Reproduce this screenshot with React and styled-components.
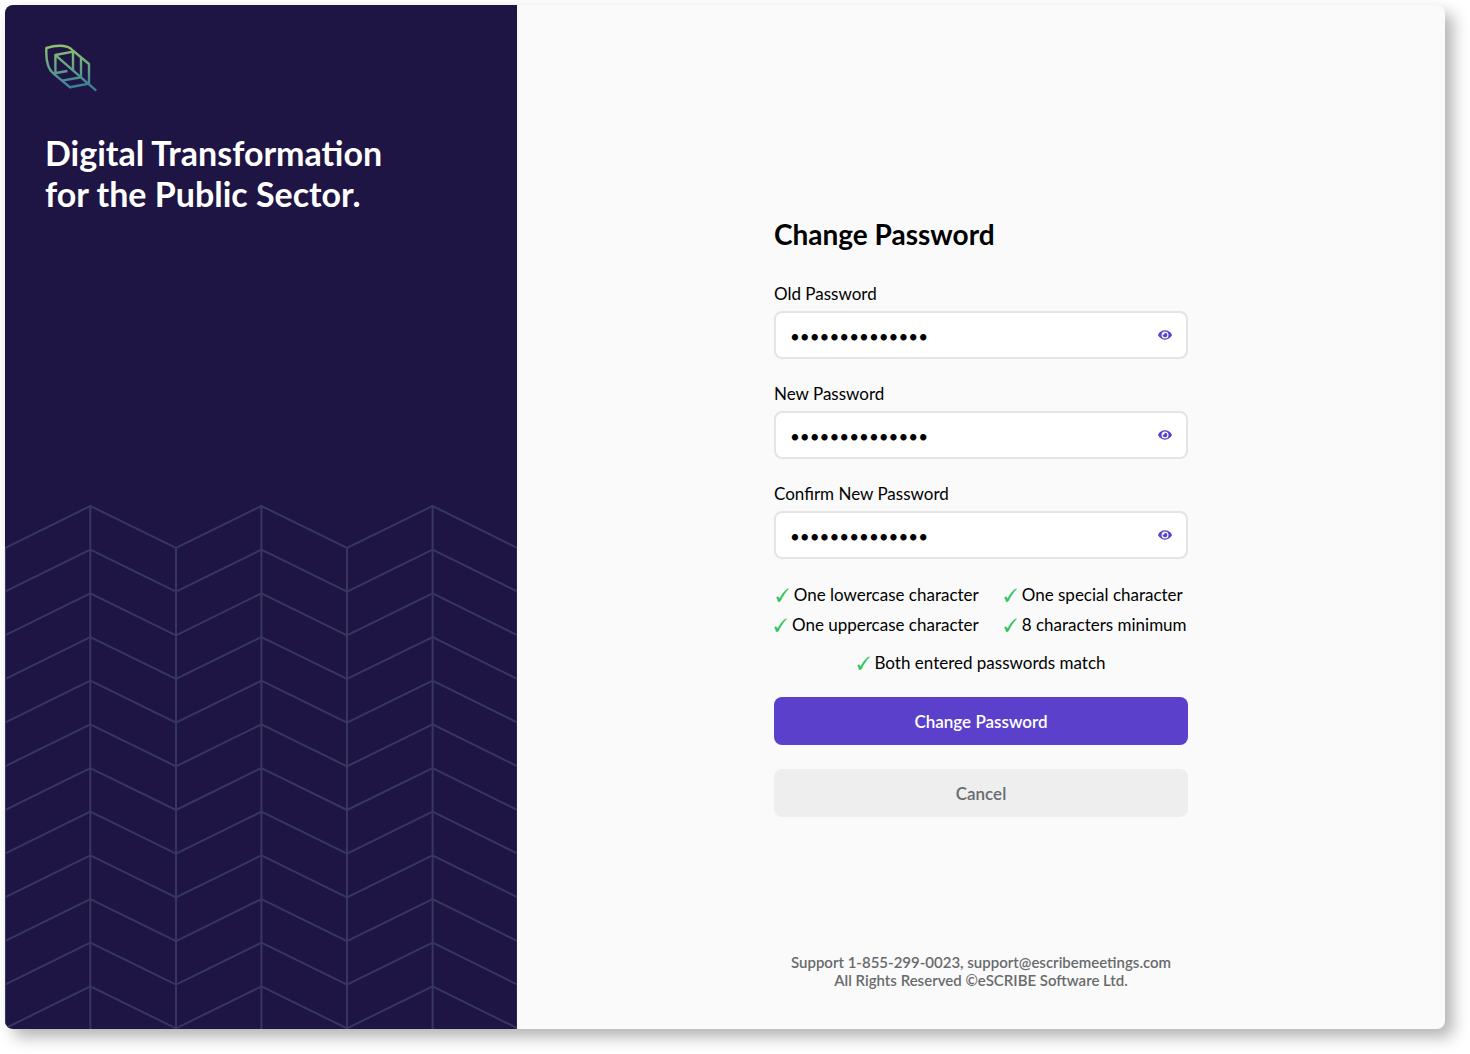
import React, { useState } from "react";
import styled, { createGlobalStyle } from "styled-components";
import { FaEye } from "react-icons/fa";

const GlobalStyle = createGlobalStyle`
  * {
    box-sizing: border-box;
  }

  body {
    margin: 0;
    background: #fff;
    font-family: Lato, sans-serif;
  }
`;

const Page = styled.div`
  display: flex;
  min-height: 100vh;
  padding: 5px 25px 25px 5px;
`;

const Card = styled.div`
  flex: 1;
  display: grid;
  grid-template-columns: 16fr 29fr;
  border-radius: 8px;
  overflow: hidden;
  background: #fafafa;
  box-shadow: 8px 8px 16px rgba(0, 0, 0, 0.3);
`;

const Brand = styled.aside`
  display: flex;
  flex-direction: column;
  background: #1f1544;
  color: #fff;
`;

const BrandTop = styled.div`
  padding: 39px 40px;
`;

const Slogan = styled.h2`
  margin: 40px 0 0;
  font-size: 34px;
  font-weight: 700;
  line-height: 41px;
`;

const Pattern = styled.svg`
  display: block;
  width: 100%;
  margin-top: auto;
`;

const Content = styled.main`
  display: grid;
  grid-template-rows: 1fr auto 1fr;
  justify-items: center;
`;

const Form = styled.form`
  grid-row: 2;
  width: 414px;
  max-width: 100%;
  display: flex;
  flex-direction: column;
`;

const Title = styled.h1`
  margin: 0 0 32px;
  font-size: 28px;
  font-weight: 700;
  line-height: 35px;
  color: #000;
`;

const Fields = styled.div`
  display: flex;
  flex-direction: column;
  gap: 25px;
`;

const Field = styled.div`
  display: flex;
  flex-direction: column;
  gap: 7px;
`;

const Label = styled.label`
  font-size: 17px;
  line-height: 20px;
  color: #000;
`;

const InputBox = styled.div`
  display: flex;
  align-items: center;
  height: 48px;
  padding: 0 14px;
  border: 2px solid #e4e4e4;
  border-radius: 8px;
  background: #fff;
`;

const Input = styled.input`
  flex: 1;
  min-width: 0;
  padding: 4px 0 0;
  border: none;
  outline: none;
  background: transparent;
  font-family: inherit;
  font-size: 17px;
  line-height: 20px;
  color: #000;
`;

const EyeButton = styled.button`
  display: flex;
  padding: 0;
  border: none;
  background: none;
  font-size: 14px;
  color: #5b40cb;
  cursor: pointer;
`;

const Rules = styled.ul`
  display: grid;
  grid-template-columns: auto auto;
  justify-content: start;
  gap: 10px 25px;
  margin: 26px 0 18px;
  padding: 0;
  list-style: none;
`;

const Rule = styled.li`
  display: flex;
  align-items: center;
  gap: 4px;
  justify-self: ${({ $align }) => $align || "start"};
  font-size: 17px;
  line-height: 20px;
  color: #000;
`;

const MatchRule = styled(Rule).attrs({ as: "div" })`
  align-self: center;
`;

const Button = styled.button`
  height: 48px;
  margin-top: 24px;
  padding: 2px 0 0;
  border: none;
  border-radius: 8px;
  background: ${({ $primary }) => ($primary ? "#5b40cb" : "#eee")};
  color: ${({ $primary }) => ($primary ? "#fff" : "#696a6e")};
  font-family: inherit;
  font-size: 17px;
  font-weight: 600;
  line-height: 20px;
  cursor: pointer;
`;

const Footer = styled.footer`
  grid-row: 3;
  align-self: end;
  padding-bottom: 40px;
  font-size: 15px;
  font-weight: 600;
  line-height: 18px;
  text-align: center;
  color: #696a6e;
`;

const Logo = () => (
  <svg width="54" height="48" viewBox="0 0 54 48" fill="none" display="block">
    <defs>
      <linearGradient id="leaf" x1="0" y1="0" x2="0" y2="48" gradientUnits="userSpaceOnUse">
        <stop offset="0" stopColor="#93c36a" />
        <stop offset="0.5" stopColor="#62a385" />
        <stop offset="0.85" stopColor="#3f8296" />
        <stop offset="1" stopColor="#3d7898" />
      </linearGradient>
    </defs>
    <g stroke="url(#leaf)" strokeWidth="2.4" strokeLinejoin="round">
      <path d="M1.4 4C9 1.6 17 1.2 22.5 2.8C25 3.6 26.8 5.4 28.4 7L44 20V39.6L25 43.2L8.2 29.4C2.6 24.6 .8 14.6 1.4 4Z" />
      <path d="M10.4 11.2L51.2 46.6" />
      <path d="M8.4 29.2L10.4 28.8V11L28 7.6V26" />
      <path d="M36 13.6V33" />
      <path d="M9.4 29.2L22.4 27" />
      <path d="M17 36.6L36.2 33.2" />
    </g>
  </svg>
);

// herringbone lines, one path per row
const rows = Array.from({ length: 12 }, (_, i) => i * 43.67);

const Herringbone = () => (
  <Pattern viewBox="0 0 512 524" fill="none" stroke="#36375f" strokeWidth="2" aria-hidden="true">
    {rows.map((y) => (
      <path key={y} d={`M0 ${y + 43}L85.3 ${y + 1}L171 ${y + 43}L256.4 ${y + 1}L342 ${y + 43}L427.6 ${y + 1}L512.5 ${y + 43}`} />
    ))}
    <path d="M85.3 1V524M256.4 1V524M427.6 1V524M171 43V524M342 43V524M0 43V524M512.5 43V524" />
  </Pattern>
);

const Check = () => (
  <svg width="14" height="16" viewBox="2 0 14 16" fill="#2fc55b" stroke="#2fc55b" strokeWidth="0.3" aria-hidden="true">
    <path d="M2.4 10.6C2.9 9.5 4.3 9.3 4.7 10.2L5.5 11.8C7.6 7.6 10 4.6 12.8 2.2L14.8 1.8C11.3 5.4 8.8 9.2 6.5 14C5.9 14.7 5 14.9 4.1 14.8C3.9 13.2 3.2 11.6 2.4 10.6Z" />
  </svg>
);

const PasswordField = ({ id, label }) => {
  const [value, setValue] = useState("Password123!ab");
  const [visible, setVisible] = useState(false);

  return (
    <Field>
      <Label htmlFor={id}>{label}</Label>
      <InputBox>
        <Input
          id={id}
          type={visible ? "text" : "password"}
          value={value}
          onChange={(e) => setValue(e.target.value)}
        />
        <EyeButton type="button" aria-label="Show password" onClick={() => setVisible(!visible)}>
          <FaEye />
        </EyeButton>
      </InputBox>
    </Field>
  );
};

const App = () => {
  return (
    <>
      <GlobalStyle />
      <Page>
        <Card>
          <Brand>
            <BrandTop>
              <Logo />
              <Slogan>
                Digital Transformation
                <br />
                for the Public Sector.
              </Slogan>
            </BrandTop>
            <Herringbone />
          </Brand>
          <Content>
            <Form onSubmit={(e) => e.preventDefault()}>
              <Title>Change Password</Title>
              <Fields>
                <PasswordField id="old" label="Old Password" />
                <PasswordField id="new" label="New Password" />
                <PasswordField id="confirm" label="Confirm New Password" />
              </Fields>
              <Rules>
                <Rule $align="end"><Check />One lowercase character</Rule>
                <Rule><Check />One special character</Rule>
                <Rule $align="end"><Check />One uppercase character</Rule>
                <Rule><Check />8 characters minimum</Rule>
              </Rules>
              <MatchRule><Check />Both entered passwords match</MatchRule>
              <Button type="submit" $primary>Change Password</Button>
              <Button type="button">Cancel</Button>
            </Form>
            <Footer>
              Support 1-855-299-0023, support@escribemeetings.com
              <br />
              All Rights Reserved ©eSCRIBE Software Ltd.
            </Footer>
          </Content>
        </Card>
      </Page>
    </>
  );
};

export default App;
